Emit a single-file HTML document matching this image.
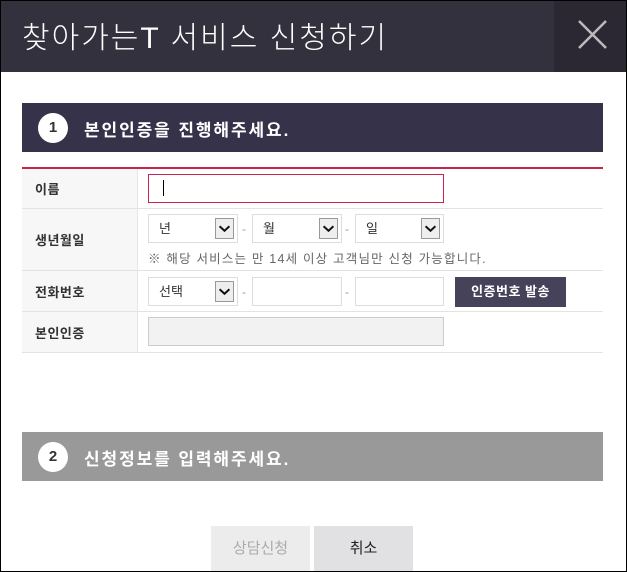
<!DOCTYPE html>
<html><head><meta charset="utf-8"><style>
*{box-sizing:border-box;margin:0;padding:0}
body{width:627px;height:572px;overflow:hidden;background:#fff;font-family:"Liberation Sans","Noto Sans CJK KR",sans-serif;position:relative}
.frame{position:absolute;left:0;top:0;width:627px;height:572px;border:1px solid #000;pointer-events:none;z-index:10}
.hd{position:absolute;left:0;top:0;width:627px;height:72px;background:#34313f}
.hd h1{position:absolute;left:22px;top:13px;font-size:30px;font-weight:300;color:#fff;letter-spacing:2px}
.cls{position:absolute;left:554px;top:0;width:73px;height:72px;background:#2b2833}
.bar{position:absolute;left:22px;width:581px;height:49px;color:#fff;font-size:17px;font-weight:bold}
.bar .c{position:absolute;left:16px;top:10px;width:30px;height:30px;border-radius:50%;background:#fff;color:#333;font-size:15px;text-align:center;line-height:30px}
.bar span.t{position:absolute;left:62px;top:13px;letter-spacing:1.9px}
.red{position:absolute;left:22px;top:167px;width:581px;height:2px;background:#c8254e}
.row{position:absolute;left:22px;width:581px;border-bottom:1px solid #e3e3e3}
.lab{position:absolute;left:0;top:0;bottom:0;width:116px;background:#f7f7f7;border-right:1px solid #e6e6e6;font-size:13px;font-weight:bold;color:#333;padding-left:13px;display:flex;align-items:center;letter-spacing:0.5px}
.box{position:absolute;height:29px;border:1px solid #ddd;background:#fff;font-size:13px;color:#333;padding-left:10px;line-height:27px}
.sel .ar{position:absolute;right:3px;top:3px;width:19px;height:21px;border:1px solid #999;background:#eee}
.dash{position:absolute;color:#999;font-size:12px}
</style></head><body>
<div class="hd"><h1>찾아가는T 서비스 신청하기</h1>
<div class="cls"><svg width="73" height="72"><path d="M25 21L52 48M52 21L25 48" stroke="#bbb" stroke-width="2.5"/></svg></div></div>

<div class="bar" style="top:103px;background:#35324a"><div class="c">1</div><span class="t">본인인증을 진행해주세요.</span></div>
<div class="red"></div>

<div class="row" style="top:169px;height:40px"><div class="lab">이름</div></div>
<div class="box" style="left:148px;top:174px;width:296px;border-color:#c8254e"><span style="display:inline-block;width:1px;height:16px;background:#000;margin-top:5px;margin-left:4px"></span></div>

<div class="row" style="top:209px;height:62px"><div class="lab">생년월일</div></div>
<div class="box sel" style="left:148px;top:214px;width:90px">년<svg class="ar" viewBox="0 0 19 21"><path d="M4 8l5.5 5 5.5-5" stroke="#111" stroke-width="2.2" fill="none"/></svg></div>
<div class="dash" style="left:242px;top:222px">-</div>
<div class="box sel" style="left:252px;top:214px;width:90px">월<svg class="ar" viewBox="0 0 19 21"><path d="M4 8l5.5 5 5.5-5" stroke="#111" stroke-width="2.2" fill="none"/></svg></div>
<div class="dash" style="left:345px;top:222px">-</div>
<div class="box sel" style="left:355px;top:214px;width:89px">일<svg class="ar" viewBox="0 0 19 21"><path d="M4 8l5.5 5 5.5-5" stroke="#111" stroke-width="2.2" fill="none"/></svg></div>
<div style="position:absolute;left:148px;top:248px;font-size:12.5px;color:#666;letter-spacing:1.2px">※ 해당 서비스는 만 14세 이상 고객님만 신청 가능합니다.</div>

<div class="row" style="top:271px;height:41px"><div class="lab">전화번호</div></div>
<div class="box sel" style="left:148px;top:277px;width:90px">선택<svg class="ar" viewBox="0 0 19 21"><path d="M4 8l5.5 5 5.5-5" stroke="#111" stroke-width="2.2" fill="none"/></svg></div>
<div class="dash" style="left:242px;top:285px">-</div>
<div class="box" style="left:252px;top:277px;width:90px"></div>
<div class="dash" style="left:345px;top:285px">-</div>
<div class="box" style="left:355px;top:277px;width:89px"></div>
<div style="position:absolute;left:455px;top:277px;width:111px;height:30px;background:#45425a;color:#fff;font-size:13px;font-weight:bold;text-align:center;line-height:30px;letter-spacing:0.5px">인증번호 발송</div>

<div class="row" style="top:312px;height:41px"><div class="lab">본인인증</div></div>
<div class="box" style="left:148px;top:317px;width:296px;background:#f2f2f2;border-color:#ccc"></div>

<div class="bar" style="top:432px;background:#999"><div class="c">2</div><span class="t">신청정보를 입력해주세요.</span></div>

<div style="position:absolute;left:211px;top:526px;width:99px;height:46px;background:#ececec;color:#aaa;font-size:15px;text-align:center;line-height:46px">상담신청</div>
<div style="position:absolute;left:314px;top:526px;width:99px;height:46px;background:#e1e1e4;color:#222;font-size:15px;text-align:center;line-height:46px">취소</div>
<div class="frame"></div>
</body></html>
